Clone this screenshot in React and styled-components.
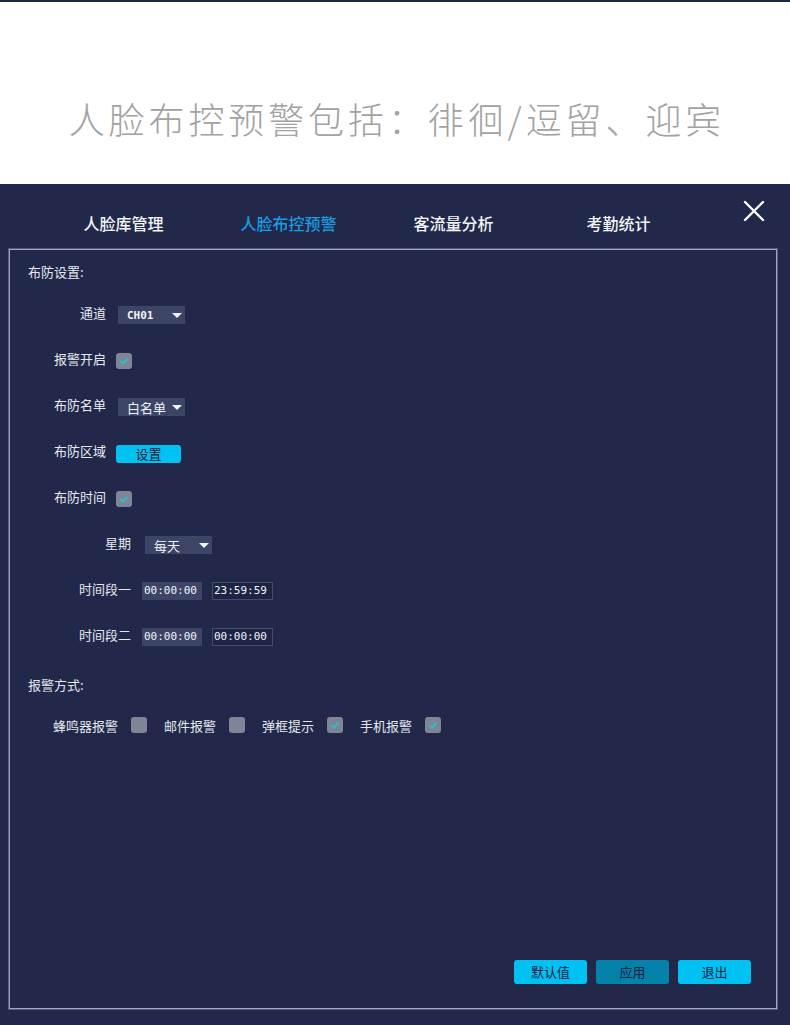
import styled, { createGlobalStyle } from 'styled-components';

const GlobalStyle = createGlobalStyle`
  html, body {
    margin: 0;
    padding: 0;
    background: #21284a;
  }
  body {
    font-family: "Noto Sans CJK SC", "Noto Sans", sans-serif;
  }
`;

const Page = styled.div`
  width: 790px;
  height: 1025px;
  display: flex;
  flex-direction: column;
  overflow: hidden;
`;

const TopStripe = styled.div`
  height: 2px;
  flex-shrink: 0;
  background: #1f2747;
`;

const Banner = styled.div`
  height: 182px;
  flex-shrink: 0;
  background: #fff;
  display: flex;
  align-items: flex-start;
  justify-content: center;
`;

const BannerTitle = styled.h1`
  margin: 94px 0 0;
  padding-left: 3.9px;
  font-size: 36px;
  line-height: 44px;
  font-weight: 300;
  letter-spacing: 3.9px;
  color: #a2a2a2;
`;

const Screen = styled.div`
  flex: 1;
  background: #21284a;
  display: flex;
  flex-direction: column;
`;

const Header = styled.div`
  height: 65px;
  flex-shrink: 0;
  display: flex;
  align-items: flex-start;
  padding-left: 41px;
`;

const Tab = styled.div`
  width: 165px;
  margin-top: 29px;
  text-align: center;
  font-size: 16px;
  line-height: 20px;
  font-weight: 500;
  color: ${p => (p.$active ? '#1a9be2' : '#f4f5f8')};
`;

const CloseButton = styled.div`
  margin: 16px 0 0 42px;
  width: 22px;
  height: 22px;
`;

const Panel = styled.div`
  box-sizing: border-box;
  margin: 0 13px 0 9px;
  height: 760px;
  flex-shrink: 0;
  border: 1px solid #a4a8ba;
  box-shadow: 0 0 0 1px #555c7a;
  display: flex;
  flex-direction: column;
  padding: 0 24px 24px 0;
`;

const SectionTitle = styled.div`
  margin: ${p => p.$top}px 0 0 18px;
  font-size: 13px;
  line-height: 20px;
  color: #e6e8ef;
`;

const Form = styled.div`
  margin-top: 10px;
  display: flex;
  flex-direction: column;
`;

const Row = styled.div`
  height: 46px;
  display: flex;
  align-items: center;
`;

const Label = styled.div`
  width: ${p => p.$width}px;
  margin-right: ${p => p.$gap}px;
  text-align: right;
  font-size: 13px;
  line-height: 18px;
  margin-top: -4px;
  color: #e6e8ef;
  white-space: nowrap;
`;

const Select = styled.div`
  width: 67px;
  height: 18px;
  box-sizing: border-box;
  background: #3d4566;
  display: flex;
  align-items: center;
  justify-content: space-between;
  padding: 0 2px 0 9px;
  font-family: ${p => (p.$mono ? '"DejaVu Sans Mono", monospace' : '"Noto Sans CJK SC", sans-serif')};
  font-weight: ${p => (p.$mono ? 700 : 400)};
  font-size: ${p => (p.$mono ? 11 : 13)}px;
  color: #f0f2f6;
`;

const Caret = styled.span`
  width: 0;
  height: 0;
  border-left: 5px solid transparent;
  border-right: 5px solid transparent;
  border-top: 5px solid #f0f2f6;
  margin-right: 1px;
`;

const Box = styled.div`
  width: 16px;
  height: 16px;
  border-radius: 3px;
  background: #7e8597;
  display: flex;
  align-items: center;
  justify-content: center;
  flex-shrink: 0;
`;

const SmallButton = styled.div`
  width: 65px;
  height: 18px;
  border-radius: 3px;
  background: #00c2f2;
  color: #132040;
  font-size: 13px;
  line-height: 18px;
  text-align: center;
  margin-top: 1px;
`;

const TimeField = styled.div`
  width: ${p => p.$w}px;
  height: 18px;
  box-sizing: border-box;
  margin-right: 10px;
  background: ${p => (p.$filled ? '#3d4566' : '#1d2444')};
  border: 1px solid ${p => (p.$filled ? '#3d4566' : '#454d6d')};
  font-family: "DejaVu Sans Mono", monospace;
  font-size: 11px;
  line-height: 16px;
  padding-left: 1px;
  color: #f4f5f8;
`;

const AlarmRow = styled.div`
  margin: 20px 0 0 43px;
  height: 20px;
  display: flex;
  align-items: center;
`;

const AlarmItem = styled.div`
  display: flex;
  align-items: center;
  margin-right: 17px;
  font-size: 13px;
  color: #e6e8ef;
  gap: 13px;
`;

const Footer = styled.div`
  margin-top: auto;
  display: flex;
  justify-content: flex-end;
  gap: 9px;
  padding-right: 1px;
`;

const FooterButton = styled.div`
  width: 73px;
  height: 24px;
  border-radius: 3px;
  background: ${p => (p.$dim ? '#0482aa' : '#00c2f2')};
  color: #122040;
  font-size: 13px;
  line-height: 24px;
  text-align: center;
`;

const Check = ({ on }) => (
  <Box>
    {on && (
      <svg width="12" height="12" viewBox="0 0 12 12">
        <path d="M2.5 6.2 L5 8.6 L9.6 3.6" fill="none" stroke="#22c9c9" strokeWidth="1.6" />
      </svg>
    )}
  </Box>
);

const tabs = ['人脸库管理', '人脸布控预警', '客流量分析', '考勤统计'];

const alarms = [
  { label: '蜂鸣器报警', on: false },
  { label: '邮件报警', on: false },
  { label: '弹框提示', on: true },
  { label: '手机报警', on: true },
];

export default function App() {
  return (
    <Page>
      <GlobalStyle />
      <TopStripe />
      <Banner>
        <BannerTitle>人脸布控预警包括：徘徊/逗留、迎宾</BannerTitle>
      </Banner>
      <Screen>
        <Header>
          {tabs.map((t, i) => (
            <Tab key={t} $active={i === 1}>{t}</Tab>
          ))}
          <CloseButton>
            <svg width="22" height="22" viewBox="0 0 22 22">
              <path d="M2 2 L20 20 M20 2 L2 20" stroke="#fff" strokeWidth="2.4" strokeLinecap="round" />
            </svg>
          </CloseButton>
        </Header>
        <Panel>
          <SectionTitle $top={12}>布防设置:</SectionTitle>
          <Form>
            <Row>
              <Label $width={96} $gap={12}>通道</Label>
              <Select $mono>CH01<Caret /></Select>
            </Row>
            <Row>
              <Label $width={96} $gap={10}>报警开启</Label>
              <Check on />
            </Row>
            <Row>
              <Label $width={96} $gap={12}>布防名单</Label>
              <Select>白名单<Caret /></Select>
            </Row>
            <Row>
              <Label $width={96} $gap={10}>布防区域</Label>
              <SmallButton>设置</SmallButton>
            </Row>
            <Row>
              <Label $width={96} $gap={10}>布防时间</Label>
              <Check on />
            </Row>
            <Row>
              <Label $width={121} $gap={14}>星期</Label>
              <Select>每天<Caret /></Select>
            </Row>
            <Row>
              <Label $width={121} $gap={11}>时间段一</Label>
              <TimeField $w={60} $filled>00:00:00</TimeField>
              <TimeField $w={61}>23:59:59</TimeField>
            </Row>
            <Row>
              <Label $width={121} $gap={11}>时间段二</Label>
              <TimeField $w={60} $filled>00:00:00</TimeField>
              <TimeField $w={61}>00:00:00</TimeField>
            </Row>
          </Form>
          <SectionTitle $top={15}>报警方式:</SectionTitle>
          <AlarmRow>
            {alarms.map(a => (
              <AlarmItem key={a.label}>
                {a.label}
                <Check on={a.on} />
              </AlarmItem>
            ))}
          </AlarmRow>
          <Footer>
            <FooterButton>默认值</FooterButton>
            <FooterButton $dim>应用</FooterButton>
            <FooterButton>退出</FooterButton>
          </Footer>
        </Panel>
      </Screen>
    </Page>
  );
}
